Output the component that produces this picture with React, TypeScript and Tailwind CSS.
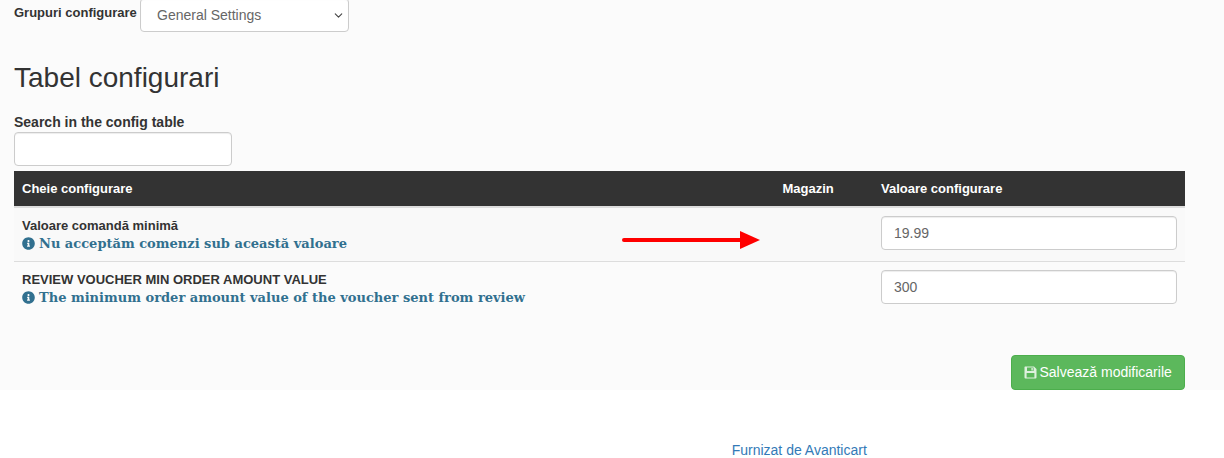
import { ChevronDown } from "lucide-react";
import { FaInfoCircle } from "react-icons/fa";

const rows = [
  {
    label: "Valoare comandă minimă",
    hint: "Nu acceptăm comenzi sub această valoare",
    value: "19.99",
  },
  {
    label: "REVIEW VOUCHER MIN ORDER AMOUNT VALUE",
    hint: "The minimum order amount value of the voucher sent from review",
    value: "300",
  },
];

function RedArrow() {
  return (
    <svg
      width="140"
      height="20"
      viewBox="0 0 140 20"
      className="absolute left-[607px] top-[22px]"
    >
      <path d="M3 10 H122" stroke="#ff0000" strokeWidth="4" strokeLinecap="round" />
      <path d="M119 1 L139 10 L119 19 Z" fill="#ff0000" />
    </svg>
  );
}

// fa-floppy-o, font awesome 4 shape
function SaveIcon() {
  return (
    <svg width="13" height="13" viewBox="0 0 13 13" fill="currentColor" className="shrink-0 opacity-80">
      <path
        fillRule="evenodd"
        d="M1 0.5 H10 L12.5 3 V11.5 a1 1 0 0 1 -1 1 H1.5 a1 1 0 0 1 -1 -1 V1 Z M3 1.6 V5 H9.6 V1.6 Z M7.4 2 H8.8 V4.4 H7.4 Z M2.6 7 V11.4 H10.4 V7 Z"
      />
    </svg>
  );
}

export default function App() {
  return (
    <div className="h-[458px] w-[1224px] overflow-hidden bg-white font-['Liberation_Sans',Arial,sans-serif] text-[14px] text-[#333]">
      <div className="h-[390px] bg-[#fbfbfb] px-[14px]">
        {/* Grup */}
        <div className="flex h-[32px] items-start">
          <label className="mt-[4px] w-[126px] text-[13px] leading-[17px] font-bold">
            Grupuri configurare
          </label>
          <div className="relative -mt-[2px] flex h-[34px] w-[209px] items-center rounded border border-[#ccc] bg-white pl-[16px] text-[#666] shadow-[inset_0_1px_1px_rgba(0,0,0,0.075)]">
            General Settings
            <ChevronDown className="absolute right-[3px] top-[10px] h-[13px] w-[13px] text-[#444]" strokeWidth={2} />
          </div>
        </div>

        <h2 className="mt-[30px] text-[28px] leading-[31px] font-normal">Tabel configurari</h2>

        <label className="mt-[19px] block text-[14px] leading-[20px] font-bold">
          Search in the config table
        </label>
        <input
          type="text"
          className="block h-[34px] w-[218px] rounded border border-[#ccc] bg-white shadow-[inset_0_1px_1px_rgba(0,0,0,0.075)]"
        />

        {/* Tabel */}
        <table className="mt-[5px] w-[1171px] table-fixed border-separate border-spacing-0 text-[13px]">
          <thead>
            <tr className="bg-[#333] text-left text-white">
              <th className="h-[37px] w-[760.5px] border-b-2 border-[#ddd] px-[8px] font-bold">Cheie configurare</th>
              <th className="h-[37px] w-[98.5px] border-b-2 border-[#ddd] px-[8px] font-bold">Magazin</th>
              <th className="h-[37px] border-b-2 border-[#ddd] px-[8px] font-bold">Valoare configurare</th>
            </tr>
          </thead>
          <tbody>
            {rows.map((row, i) => {
              const cell = i === 0 ? "h-[53px] bg-[#f9f9f9]" : "h-[54px] border-t border-[#ddd]";
              return (
                <tr key={row.value}>
                  <td className={`${cell} relative px-[8px] pt-[9px] pb-[8px] align-top`}>
                    <div className="text-[13px] leading-[18px] font-bold text-[#333]">{row.label}</div>
                    <div className="flex items-center gap-[4px] font-['DejaVu_Serif',serif] text-[13px] leading-[18px] font-bold text-[#31708f]">
                      <FaInfoCircle className="h-[13px] w-[13px] -translate-y-px" />
                      {row.hint}
                    </div>
                    {i === 0 && <RedArrow />}
                  </td>
                  <td className={cell} />
                  <td className={`${cell} px-[8px] py-[8px] align-top`}>
                    <input
                      type="text"
                      defaultValue={row.value}
                      className="block h-[34px] w-[296px] rounded border border-[#ccc] bg-white px-[12px] text-[14px] text-[#666] shadow-[inset_0_1px_1px_rgba(0,0,0,0.075)]"
                    />
                  </td>
                </tr>
              );
            })}
          </tbody>
        </table>

        <div className="mt-[40px] flex w-[1171px] justify-end">
          <button className="flex h-[35px] w-[174px] items-center gap-[3px] rounded border border-[#4cae4c] bg-[#5cb85c] pl-[11.5px] text-[14px] text-white">
            <SaveIcon />
            Salvează modificarile
          </button>
        </div>
      </div>

      <div className="flex justify-center pt-[50px] pl-[374.5px]">
        <span className="text-[14px] leading-[20px] text-[#337ab7]">Furnizat de Avanticart</span>
      </div>
    </div>
  );
}
